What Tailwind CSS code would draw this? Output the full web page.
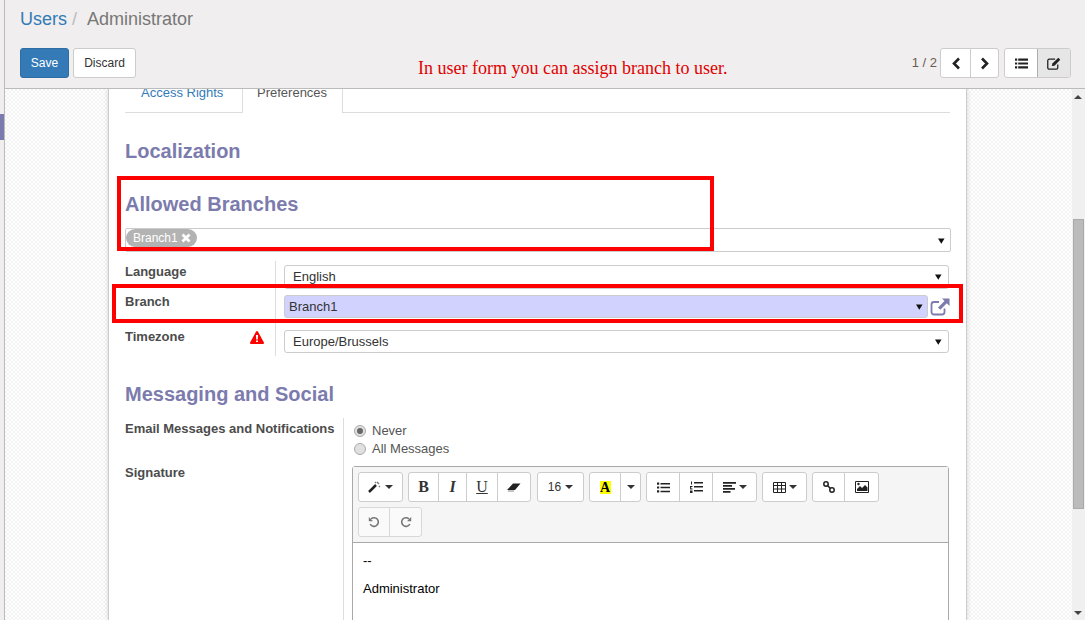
<!DOCTYPE html>
<html lang="en">
<head>
  <meta charset="UTF-8">
  <title>Users / Administrator</title>
  <script src="https://cdn.jsdelivr.net/npm/@tailwindcss/browser@4"></script>
</head>
<body class="h-[620px] w-[1085px] overflow-hidden bg-white font-['Liberation_Sans',Arial,sans-serif] text-[13px] text-[#4c4c4c]">
  <div class="flex h-[620px]">
    <!-- Left rail -->
    <div class="w-[5px] shrink-0 border-r border-[#bbb] bg-[#f0eeee]">
      <div class="mt-[114px] h-[26px] bg-[#7c7bad]"></div>
    </div>

    <div class="flex w-[1080px] flex-col">
      <!-- Control panel -->
      <div class="relative h-[89px] shrink-0 border-b border-[#bbb] bg-[#f0eeee] pl-[15px] pr-[14px]">
        <div class="flex h-[48px] items-start pt-[8px] text-[18px] leading-[23px]">
          <span class="text-[#337ab7]">Users</span>
          <span class="ml-[5px] text-[#bbb]">/</span>
          <span class="ml-[10px] text-[#777]">Administrator</span>
        </div>
        <div class="flex h-[30px] items-center">
          <button class="h-[30px] w-[49px] rounded-[3px] border border-[#2e6da4] bg-[#337ab7] text-[12px] text-white">Save</button>
          <button class="ml-[4px] h-[30px] w-[63px] rounded-[3px] border border-[#ccc] bg-white text-[12px] text-[#333]">Discard</button>
          <div class="ml-[282px] mt-[9px] font-['Liberation_Serif',serif] text-[18px] leading-[22px] text-[#e00000]">In user form you can assign branch to user.</div>
          <div class="ml-auto text-[13px] text-[#6b5a4e]">1 / 2</div>
          <div class="ml-[3px] flex h-[30px] w-[59px] overflow-hidden rounded-[3px] border border-[#ccc] bg-white">
            <div class="flex w-[30px] items-center justify-center border-r border-[#ccc]">
              <svg width="10" height="13" viewBox="0 0 10 13"><path d="M8 1.500 3 6.500l5 5" fill="none" stroke="#222" stroke-width="2.600"/></svg>
            </div>
            <div class="flex flex-1 items-center justify-center">
              <svg width="10" height="13" viewBox="0 0 10 13"><path d="m2 1.500 5 5-5 5" fill="none" stroke="#222" stroke-width="2.600"/></svg>
            </div>
          </div>
          <div class="ml-[5px] flex h-[30px] w-[67px] overflow-hidden rounded-[3px] border border-[#ccc] bg-white">
            <div class="flex w-[32px] items-center justify-center">
              <svg width="13" height="11" viewBox="0 0 13 11" fill="#222"><path d="M0 .5h2.200v2.200H0zM3.200.5H13v2.200H3.200zM0 4.400h2.200v2.200H0zM3.200 4.400H13v2.200H3.200zM0 8.300h2.200v2.200H0zM3.200 8.300H13v2.200H3.200z"/></svg>
            </div>
            <div class="flex flex-1 items-center justify-center border-l border-[#adadad] bg-[#e6e6e6]">
              <svg width="14" height="13" viewBox="0 0 13 12" fill="none" stroke="#222"><path d="M10 7v3a1.300 1.300 0 0 1-1.300 1.300H2A1.300 1.300 0 0 1 .7 10V3.300A1.300 1.300 0 0 1 2 2h5.500" stroke-width="1.200"/><path d="M4.500 8.300 5 6l5.500-5.300 1.800 1.800L7 8z" fill="#222" stroke="none"/></svg>
            </div>
          </div>
        </div>
      </div>

      <div class="flex min-h-0 flex-1">
        <!-- Scrolling content -->
        <div class="relative h-full w-[1067px] overflow-hidden bg-[conic-gradient(#f3f3f3_25%,#fff_0_50%,#f3f3f3_0_75%,#fff_0)] bg-[length:4px_4px]">
          <div class="ml-[103px] h-full w-[859px] overflow-hidden border-x border-[#ccc] bg-white px-[16px] shadow-[0_0_5px_rgba(0,0,0,0.15)]">
            <!-- Tabs -->
            <div class="-mt-[15px] flex h-[39px] border-b border-[#ddd] pl-[1px] leading-[18px]">
              <div class="h-[38px] w-[116px] px-[15px] pt-[10px] text-[#337ab7]">Access Rights</div>
              <div class="h-[39px] w-[101px] border-x border-[#ddd] bg-white px-[14px] pt-[10px] text-[#555]">Preferences</div>
            </div>

            <h2 class="mt-[26px] text-[20px] font-bold leading-[24px] text-[#7c7bad]">Localization</h2>
            <h2 class="mt-[29px] text-[20px] font-bold leading-[24px] text-[#7c7bad]">Allowed Branches</h2>

            <!-- Allowed branches tags -->
            <div class="mt-[12px] flex h-[24px] w-[826px] items-start justify-between rounded-[2px] border border-[#ccc] pr-[5px]">
              <div class="flex h-[18px] w-[71px] items-center rounded-full bg-[#b3b3b3] pl-[7px] text-[12px] text-white">
                Branch1
                <svg class="ml-[3px]" width="10" height="10" viewBox="0 0 10 10"><path d="M1.500 1.500l7 7m0-7-7 7" stroke="#fff" stroke-width="2.800"/></svg>
              </div>
              <svg class="mt-[9px]" width="7" height="6" viewBox="0 0 8 6"><path d="M0 0h7.500L3.750 6z" fill="#111"/></svg>
            </div>

            <!-- Language / Branch / Timezone -->
            <div class="mt-[9px]">
              <div class="flex h-[30px]">
                <div class="h-full w-[150px] pt-[3px] font-bold leading-[16px]">Language</div>
                <div class="h-full flex-1 border-l border-[#ddd] pl-[8px] pt-[4px]">
                  <div class="flex h-[24px] w-[665px] items-center justify-between rounded-[3px] border border-[#ccc] pl-[8px] pr-[6px] text-[#333]">English
                    <svg width="7" height="6" viewBox="0 0 8 6"><path d="M0 0h7.500L3.750 6z" fill="#111"/></svg>
                  </div>
                </div>
              </div>
              <div class="flex h-[35px]">
                <div class="h-full w-[150px] pt-[3px] font-bold leading-[16px]">Branch</div>
                <div class="flex h-full flex-1 items-start border-l border-[#ddd] pl-[8px] pt-[4px]">
                  <div class="flex h-[23px] w-[644px] items-center justify-between rounded-[3px] border border-[#ccc] bg-[#d2d2ff] pl-[4px] pr-[4px] text-[#333]">Branch1
                    <svg width="7" height="6" viewBox="0 0 8 6"><path d="M0 0h7.500L3.750 6z" fill="#111"/></svg>
                  </div>
                  <svg class="ml-[2px] mt-[3px]" width="20" height="18" viewBox="0 0 20 18" fill="none"><path d="M14.500 10.500V14a2.500 2.500 0 0 1-2.500 2.500H4A2.500 2.500 0 0 1 1.500 14V6.500A2.500 2.500 0 0 1 4 4h5" stroke="#7c7bad" stroke-width="1.800"/><path d="M12 .5h7.500V8L16.800 5.300 10.300 11.800 8 9.500l6.500-6.500z" fill="#7c7bad"/></svg>
                </div>
              </div>
              <div class="flex h-[30px]">
                <div class="flex h-full w-[150px] items-start justify-between pr-[11px] pt-[3px] font-bold leading-[16px]">Timezone
                  <svg class="mt-[2px]" width="14" height="13" viewBox="0 0 14 13"><path fill-rule="evenodd" d="M7 0c.4 0 .7.200.9.500l6 11c.4.700-.1 1.500-.9 1.500H1c-.8 0-1.300-.8-.9-1.500l6-11C6.300.200 6.600 0 7 0zM6 4l.2 4.500h1.600L8 4zm0 5.500V11h2V9.500z" fill="#f00"/></svg>
                </div>
                <div class="h-full flex-1 border-l border-[#ddd] pl-[8px] pt-[4px]">
                  <div class="flex h-[23px] w-[665px] items-center justify-between rounded-[3px] border border-[#ccc] pl-[8px] pr-[6px] text-[#333]">Europe/Brussels
                    <svg width="7" height="6" viewBox="0 0 8 6"><path d="M0 0h7.500L3.750 6z" fill="#111"/></svg>
                  </div>
                </div>
              </div>
            </div>

            <h2 class="mt-[26px] text-[20px] font-bold leading-[24px] text-[#7c7bad]">Messaging and Social</h2>

            <!-- Notifications + signature -->
            <div class="mt-[12px] flex">
              <div class="w-[218px] font-bold leading-[16px]">
                <div class="pt-[3px]">Email Messages and Notifications</div>
                <div class="mt-[28px]">Signature</div>
              </div>
              <div class="h-[300px] flex-1 border-l border-[#ddd] pl-[8px]">
                <div class="mt-[4px] flex h-[18px] items-center pl-[2px] text-[#555]">
                  <span class="flex h-[12px] w-[12px] items-center justify-center rounded-full border border-[#aaa] bg-[#e0e0e0]"><span class="h-[6px] w-[6px] rounded-full bg-[#666]"></span></span>
                  <span class="ml-[6px]">Never</span>
                </div>
                <div class="flex h-[18px] items-center pl-[2px] text-[#555]">
                  <span class="h-[12px] w-[12px] rounded-full border border-[#aaa] bg-[#e0e0e0]"></span>
                  <span class="ml-[6px]">All Messages</span>
                </div>

                <!-- Signature editor -->
                <div class="mt-[8px] w-[597px] rounded-t-[3px] border border-[#a9a9a9] text-[#333]">
                  <div class="h-[76px] border-b border-[#a9a9a9] bg-[#f5f5f5] px-[5px] pt-[5px]">
                    <div class="flex h-[30px] gap-[5px]">
                      <div class="flex w-[45px] items-center justify-center gap-[4px] rounded-[3px] border border-[#ccc] bg-white">
                        <svg width="13" height="12" viewBox="0 0 13 12"><path d="M1 11 8 4" stroke="#222" stroke-width="2.500"/><path d="M9 1 11 3M7 2 8 1M11 6 12 5" stroke="#777" stroke-width="1.400"/></svg>
                        <span class="h-0 w-0 border-x-[4px] border-t-[4px] border-x-transparent border-t-[#333]"></span>
                      </div>
                      <div class="flex w-[123px] overflow-hidden rounded-[3px] border border-[#ccc] bg-white font-['Liberation_Serif',serif] text-[16px] leading-[28px]">
                        <div class="w-[29px] text-center font-bold">B</div>
                        <div class="w-[28px] border-l border-[#ccc] text-center font-bold italic">I</div>
                        <div class="w-[31px] border-l border-[#ccc] text-center underline">U</div>
                        <div class="flex flex-1 items-center justify-center border-l border-[#ccc]">
                          <svg width="14" height="10" viewBox="0 0 14 10"><path d="M0 8 6 1.500h7.500L8 8z" fill="#222"/><path d="M1 9h6" stroke="#888"/></svg>
                        </div>
                      </div>
                      <div class="ml-[1px] flex w-[47px] items-center justify-center gap-[4px] rounded-[3px] border border-[#ccc] bg-white text-[12px]">16
                        <span class="h-0 w-0 border-x-[4px] border-t-[4px] border-x-transparent border-t-[#333]"></span>
                      </div>
                      <div class="flex w-[52px] overflow-hidden rounded-[3px] border border-[#ccc] bg-white">
                        <div class="flex w-[30px] items-center justify-center">
                          <span class="h-[13px] w-[11px] bg-[#ff0] text-center font-['Liberation_Serif',serif] text-[14px] font-bold leading-[13px] text-black">A</span>
                        </div>
                        <div class="flex flex-1 items-center justify-center border-l border-[#ccc]">
                          <span class="h-0 w-0 border-x-[4px] border-t-[4px] border-x-transparent border-t-[#333]"></span>
                        </div>
                      </div>
                      <div class="flex w-[111px] overflow-hidden rounded-[3px] border border-[#ccc] bg-white">
                        <div class="flex w-[32px] items-center justify-center">
                          <svg width="13" height="11" viewBox="0 0 13 11" fill="#222"><path d="M0 .5h2.200v2.200H0zM3.500 1h9.500v1.500H3.500zM0 4.400h2.200v2.200H0zM3.500 4.800h9.500v1.500H3.500zM0 8.300h2.200v2.200H0zM3.500 8.700h9.500v1.500H3.500z"/></svg>
                        </div>
                        <div class="flex w-[33px] items-center justify-center border-l border-[#ccc]">
                          <svg width="13" height="12" viewBox="0 0 13 12" fill="#222"><path d="M1 .5h1v3H1zM0 5h2.500v1H1.200v1.500H2.500v1H.2zM0 9.500h2.500V12H0zM4 1h9v1.500H4zM4 5h9v1.500H4zM4 9h9v1.500H4z"/></svg>
                        </div>
                        <div class="flex flex-1 items-center justify-center gap-[3px] border-l border-[#ccc]">
                          <svg width="13" height="11" viewBox="0 0 13 11" fill="#222"><path d="M0 0h13v1.700H0zM0 3h9v1.700H0zM0 6h12v1.700H0zM0 9h7.500v1.700H0z"/></svg>
                          <span class="h-0 w-0 border-x-[4px] border-t-[4px] border-x-transparent border-t-[#333]"></span>
                        </div>
                      </div>
                      <div class="flex w-[45px] items-center justify-center gap-[3px] rounded-[3px] border border-[#ccc] bg-white">
                        <svg width="13" height="11" viewBox="0 0 13 11" fill="none" stroke="#222"><path d="M.5.500h12v10H.5zM.5 3.500h12M.5 7h12M4.500.500v10M8.500.500v10"/></svg>
                        <span class="h-0 w-0 border-x-[4px] border-t-[4px] border-x-transparent border-t-[#333]"></span>
                      </div>
                      <div class="flex w-[67px] overflow-hidden rounded-[3px] border border-[#ccc] bg-white">
                        <div class="flex w-[31px] items-center justify-center">
                          <svg width="12" height="12" viewBox="0 0 12 12" fill="none" stroke="#222" stroke-width="1.500"><circle cx="3" cy="3" r="2.200"/><circle cx="9" cy="9" r="2.200"/><path d="m4.500 4.500 3 3"/></svg>
                        </div>
                        <div class="flex flex-1 items-center justify-center border-l border-[#ccc]">
                          <svg width="14" height="12" viewBox="0 0 14 12"><path d="M.5.500h13v11H.5z" fill="#fff" stroke="#222"/><path d="M2 10V8l3-3 2 2 3-3 2.500 2.500V10z" fill="#222"/><circle cx="3.500" cy="3" r="1.200" fill="#222"/></svg>
                        </div>
                      </div>
                    </div>
                    <div class="mt-[5px] flex h-[30px] w-[64px] overflow-hidden rounded-[3px] border border-[#d8d8d8] bg-[#fafafa]">
                      <div class="flex w-[30px] items-center justify-center">
                        <svg width="12" height="12" viewBox="0 0 12 12" fill="none"><path d="M3 3a4.300 4.300 0 1 1-.8 5" stroke="#777" stroke-width="1.600"/><path d="M.8 1v4.200H5z" fill="#777"/></svg>
                      </div>
                      <div class="flex flex-1 items-center justify-center border-l border-[#d8d8d8]">
                        <svg width="12" height="12" viewBox="0 0 12 12" fill="none"><path d="M9 3a4.300 4.300 0 1 0 .8 5" stroke="#777" stroke-width="1.600"/><path d="M11.200 1v4.200H7z" fill="#777"/></svg>
                      </div>
                    </div>
                  </div>
                  <div class="h-[120px] bg-white px-[10px] pt-[10px] text-black">
                    <p class="leading-[16px]">--</p>
                    <p class="mt-[12px] leading-[16px]">Administrator</p>
                  </div>
                </div>
              </div>
            </div>
          </div>

          <!-- Red annotation boxes -->
          <div class="absolute left-[112px] top-[87px] h-[75px] w-[597px] border-[4px] border-[#f00]"></div>
          <div class="absolute left-[107px] top-[195px] h-[39px] w-[851px] border-[4px] border-[#f00]"></div>
        </div>

        <!-- Scrollbar -->
        <div class="relative w-[13px] bg-[#f0f0f0]">
          <div class="ml-[2px] mt-[6px] h-0 w-0 border-x-[4px] border-b-[4px] border-x-transparent border-b-[#444]"></div>
          <div class="absolute left-[1px] top-[130px] h-[290px] w-[11px] border border-[#aaa] bg-[#bbb]"></div>
          <div class="absolute bottom-[5px] left-[2px] h-0 w-0 border-x-[4px] border-t-[4px] border-x-transparent border-t-[#444]"></div>
        </div>
      </div>
    </div>
  </div>
</body>
</html>
